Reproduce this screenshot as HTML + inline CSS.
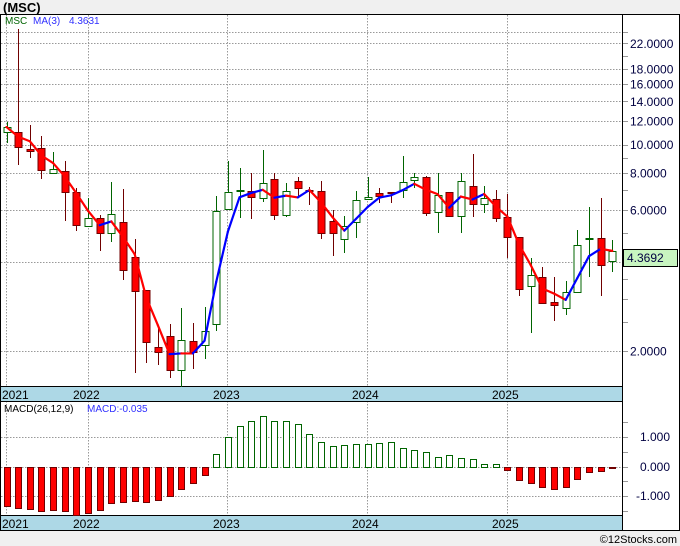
<!DOCTYPE html>
<html><head><meta charset="utf-8"><style>
body{margin:0;background:#f0f0f0;width:680px;height:546px;overflow:hidden;font-family:"Liberation Sans",sans-serif}
svg{position:absolute;left:0;top:0}
</style></head><body>
<svg id="s" width="680" height="546" xmlns="http://www.w3.org/2000/svg"></svg>
<script>
const S=document.getElementById('s');let h='';
const Y=p=>351-128.3*Math.log(p/2);
const P=y=>2*Math.exp((351-y)/128.3);
h+='<rect x="0" y="0" width="680" height="546" fill="#f0f0f0"/>';
h+='<text x="3" y="12" font-size="13" font-weight="bold" fill="#000">(MSC)</text>';
h+='<rect x="0.5" y="14.5" width="679" height="516" fill="#fff" stroke="#000"/>';
// grid main
[2,4,6,8,10,12,14,16,18,22,24].forEach(v=>{const y=Math.round(Y(v))+.5;h+=`<line x1="1" x2="622" y1="${y}" y2="${y}" stroke="#999" stroke-dasharray="1.5,1.5"/>`;});
[6,88,227,367,507].forEach(x=>{h+=`<line x1="${x+.5}" x2="${x+.5}" y1="15" y2="386" stroke="#999" stroke-dasharray="1.5,1.5"/><line x1="${x+.5}" x2="${x+.5}" y1="401" y2="515" stroke="#999" stroke-dasharray="1.5,1.5"/>`;});
[437,467,496].forEach(y=>{h+=`<line x1="1" x2="622" y1="${y+.5}" y2="${y+.5}" stroke="#999" stroke-dasharray="1.5,1.5"/>`;});
// right axis
h+='<line x1="622.5" x2="622.5" y1="15" y2="530" stroke="#000"/>';
[2,2.5,3,3.5,4,5,6,7,8,9,10,12,14,16,18,20,22,24].forEach(v=>{const y=Math.round(Y(v))+.5;h+=`<line x1="623" x2="628" y1="${y}" y2="${y}" stroke="#999"/>`;});
[[22,'22.0000'],[18,'18.0000'],[16,'16.0000'],[14,'14.0000'],[12,'12.0000'],[10,'10.0000'],[8,'8.0000'],[6,'6.0000'],[2,'2.0000']].forEach(([v,t])=>{h+=`<text x="630" y="${Y(v)+4.5}" font-size="12" fill="#000040">${t}</text>`;});
h+='<rect x="623.5" y="249.5" width="54" height="17" fill="#c8f5c0" stroke="#000"/><text x="627" y="262" font-size="12" fill="#000040">4.3692</text>';
[422,437,452,467,481,496,511].forEach(y=>{h+=`<line x1="623" x2="628" y1="${y+.5}" y2="${y+.5}" stroke="#999"/>`;});
h+='<text x="640" y="441" font-size="12" fill="#000040">1.000</text><text x="640" y="471" font-size="12" fill="#000040">0.000</text><text x="636" y="500" font-size="12" fill="#000040">-1.000</text>';
// date bars
[[386,401],[515,530]].forEach(([a,b])=>{h+=`<rect x="1" y="${a}" width="621" height="${b-a}" fill="#add8e6"/><line x1="1" x2="622" y1="${a+.5}" y2="${a+.5}" stroke="#000"/><line x1="1" x2="622" y1="${b+.5}" y2="${b+.5}" stroke="#000"/>`;
[[2,'2021'],[73,'2022'],[213,'2023'],[352,'2024'],[492,'2025']].forEach(([x,t])=>{h+=`<text x="${x}" y="${b-2}" font-size="12" fill="#000">${t}</text>`;});});
h+='<rect x="0" y="531" width="680" height="15" fill="#f0f0f0"/><text x="677" y="543" font-size="11" text-anchor="end" fill="#000">©12Stocks.com</text>';
// candles: [green?, bodyTop, bodyBot, high, low]
const C=[[1,127,132,122,143],[0,132,147,29,165],[0,149,151,125,158],[0,148,170,136,179],[1,169,173,152,173],[0,171,192,161,221],[0,192,225,188,231],[1,218,226,198,226],[0,218,233,215,251],[1,214,233,182,242],[0,222,270,189,280],[0,257,291,239,373],[0,290,342,290,363],[0,347,352,327,365],[0,336,370,324,378],[1,340,370,308,387],[0,341,352,323,369],[1,331,345,307,359],[1,211,324,196,331],[1,192,209,161,210],[1,190,191,168,218],[0,191,197,173,219],[1,183,198,150,202],[0,179,215,173,220],[1,191,215,183,217],[0,181,188,177,198],[0,190,191,187,205],[0,191,233,181,239],[0,221,233,210,256],[1,226,239,216,253],[1,200,222,191,238],[1,197,199,177,199],[0,193,196,188,203],[0,192,193,192,203],[1,182,190,156,198],[1,177,180,173,188],[0,177,213,176,216],[1,195,212,173,233],[0,192,216,192,216],[1,181,216,173,233],[0,186,204,154,217],[1,198,204,186,213],[0,199,218,190,222],[0,217,237,194,258],[0,237,289,237,296],[1,275,286,258,333],[0,277,303,267,304],[0,302,305,277,321],[1,292,308,281,315],[1,245,292,230,292],[1,238,239,207,277],[0,238,265,198,296],[1,251,261,240,272]];
const X=i=>6.5+i*11.65;
C.forEach((c,i)=>{const x=Math.round(X(i))+.5;const col=c[0]?'#006400':'#700000';
h+=`<line x1="${x}" x2="${x}" y1="${c[3]}" y2="${c[4]}" stroke="${col}"/>`;
const bh=Math.max(c[2]-c[1],1);
h+=`<rect x="${x-3.5}" y="${c[1]+.5}" width="7" height="${bh}" fill="${c[0]?'#fff':'#ff0000'}" stroke="${col}"/>`;});
// MA
const cl=C.map(c=>c[0]?c[1]:c[2]);
const ma=cl.map((v,i)=>{const a=cl.slice(Math.max(0,i-2),i+1).map(P);return Y(a.reduce((s,q)=>s+q,0)/a.length);});
for(let i=1;i<ma.length;i++){const col=ma[i]<ma[i-1]?'#0000ff':'#ff0000';h+=`<line x1="${X(i-1)}" y1="${ma[i-1]}" x2="${X(i)}" y2="${ma[i]}" stroke="${col}" stroke-width="2.2" stroke-linecap="round"/>`;}
h+='<text x="5" y="24" font-size="10" fill="#006400">MSC</text><text x="33" y="24" font-size="10" fill="#3030ff">MA(3)</text><text x="69" y="24" font-size="10" fill="#3030ff">4.3631</text>';
// MACD
const M=[506,508,509,511,510,511,515,513,510,503,502,501,502,500,496,489,483,475,454,437,426,421,416,421,421,424,434,442,446,445,444,444,443,442,448,450,452,457,455,458,459,464,464,470,480,483,487,489,487,479,472,471,468];
M.forEach((v,i)=>{const x=Math.round(X(i))-3+.5;const g=v<467;const t=Math.min(v,467),b=Math.max(v,467);
h+=`<rect x="${x}" y="${t+.5}" width="6" height="${Math.max(b-t,1)}" fill="${g?'#fff':'#ff0000'}" stroke="${g?'#006400':'#700000'}"/>`;});
h+='<text x="4" y="412" font-size="10" fill="#000">MACD(26,12,9)</text><text x="87" y="412" font-size="10" fill="#3030ff">MACD:-0.035</text>';
S.innerHTML=h;
</script>
</body></html>
